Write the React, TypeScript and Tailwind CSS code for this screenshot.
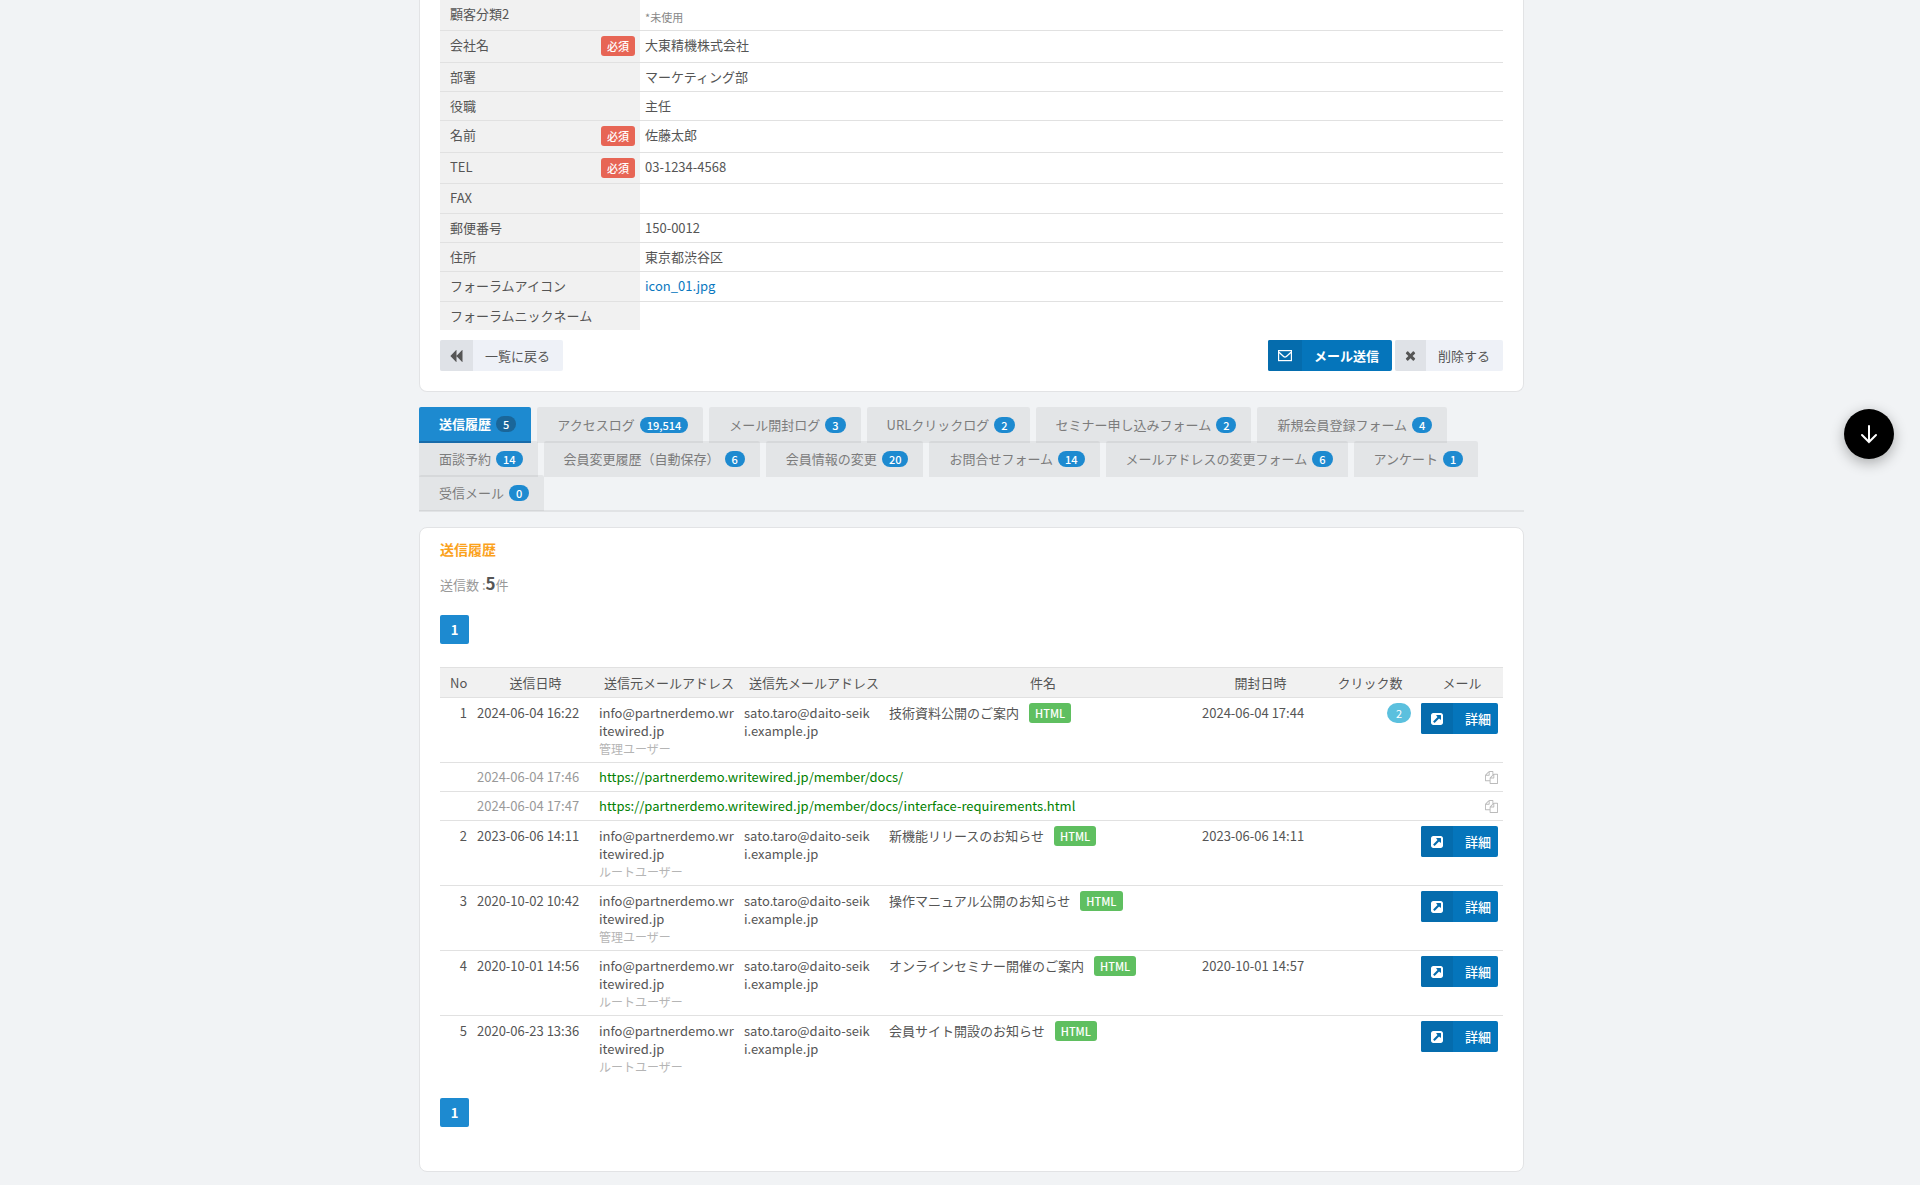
import { Fragment } from "react";
import type { ReactNode } from "react";
import clsx from "clsx";

interface ProfileField {
    label: string;
    value?: string;
    required?: boolean;
    note?: boolean;
    link?: boolean;
}

interface ClickLog {
    clickedAt: string;
    url: string;
}

interface MailHistory {
    no: number;
    sentAt: string;
    user: string;
    subject: string;
    openedAt?: string;
    clicks?: ClickLog[];
}

const FIELDS: ProfileField[] = [
    { label: "顧客分類2", value: "*未使用", note: true },
    { label: "会社名", value: "大東精機株式会社", required: true },
    { label: "部署", value: "マーケティング部" },
    { label: "役職", value: "主任" },
    { label: "名前", value: "佐藤太郎", required: true },
    { label: "TEL", value: "03-1234-4568", required: true },
    { label: "FAX" },
    { label: "郵便番号", value: "150-0012" },
    { label: "住所", value: "東京都渋谷区" },
    { label: "フォーラムアイコン", value: "icon_01.jpg", link: true },
    { label: "フォーラムニックネーム" },
];

const TABS = [
    { label: "送信履歴", count: "5", active: true },
    { label: "アクセスログ", count: "19,514" },
    { label: "メール開封ログ", count: "3" },
    { label: "URLクリックログ", count: "2" },
    { label: "セミナー申し込みフォーム", count: "2" },
    { label: "新規会員登録フォーム", count: "4" },
    { label: "面談予約", count: "14" },
    { label: "会員変更履歴（自動保存）", count: "6" },
    { label: "会員情報の変更", count: "20" },
    { label: "お問合せフォーム", count: "14" },
    { label: "メールアドレスの変更フォーム", count: "6" },
    { label: "アンケート", count: "1" },
    { label: "受信メール", count: "0" },
];

const MAILS: MailHistory[] = [
    {
        no: 1,
        sentAt: "2024-06-04 16:22",
        user: "管理ユーザー",
        subject: "技術資料公開のご案内",
        openedAt: "2024-06-04 17:44",
        clicks: [
            {
                clickedAt: "2024-06-04 17:46",
                url: "https://partnerdemo.writewired.jp/member/docs/",
            },
            {
                clickedAt: "2024-06-04 17:47",
                url: "https://partnerdemo.writewired.jp/member/docs/interface-requirements.html",
            },
        ],
    },
    {
        no: 2,
        sentAt: "2023-06-06 14:11",
        user: "ルートユーザー",
        subject: "新機能リリースのお知らせ",
        openedAt: "2023-06-06 14:11",
    },
    {
        no: 3,
        sentAt: "2020-10-02 10:42",
        user: "管理ユーザー",
        subject: "操作マニュアル公開のお知らせ",
    },
    {
        no: 4,
        sentAt: "2020-10-01 14:56",
        user: "ルートユーザー",
        subject: "オンラインセミナー開催のご案内",
        openedAt: "2020-10-01 14:57",
    },
    {
        no: 5,
        sentAt: "2020-06-23 13:36",
        user: "ルートユーザー",
        subject: "会員サイト開設のお知らせ",
    },
];

function GlyphIcon({
    className,
    d,
    viewBox = "0 0 1792 1792",
}: {
    className?: string;
    d: string;
    viewBox?: string;
}) {
    return (
        <svg
            aria-hidden="true"
            className={clsx("fill-current", className)}
            viewBox={viewBox}
        >
            <path d={d} />
        </svg>
    );
}

function BackwardIcon() {
    return (
        <GlyphIcon
            className="h-[14px] w-[13px]"
            d="M1619 141q19-19 32-13t13 32v1472q0 26-13 32t-32-13l-710-710q-9-9-13-19v710q0 26-13 32t-32-13l-710-710q-19-19-19-45t19-45l710-710q19-19 32-13t13 32v710q4-10 13-19z"
            viewBox="64 0 1664 1792"
        />
    );
}

function CloseIcon() {
    return (
        <GlyphIcon
            className="h-[14px] w-[11px]"
            d="M1490 1322q0 40-28 68l-136 136q-28 28-68 28t-68-28l-294-294-294 294q-28 28-68 28t-68-28l-136-136q-28-28-28-68t28-68l294-294-294-294q-28-28-28-68t28-68l136-136q28-28 68-28t68 28l294 294 294-294q28-28 68-28t68 28l136 136q28 28 28 68t-28 68l-294 294 294 294q28 28 28 68z"
            viewBox="192 64 1408 1792"
        />
    );
}

function OpenIcon() {
    return (
        <GlyphIcon
            className="size-[14px]"
            d="M1408 928v-480q0-26-19-45t-45-19h-480q-42 0-59 39-17 41 14 70l144 144-534 534q-19 19-19 45t19 45l102 102q19 19 45 19t45-19l534-534 144 144q18 19 45 19 12 0 25-5 39-17 39-59zm256-512v960q0 119-84.500 203.500t-203.500 84.500h-960q-119 0-203.500-84.500t-84.500-203.500v-960q0-119 84.500-203.500t203.500-84.500h960q119 0 203.500 84.500t84.500 203.500z"
        />
    );
}

function CopyIcon() {
    return (
        <GlyphIcon
            className="size-[13px]"
            d="M1696 384q40 0 68 28t28 68v1216q0 40-28 68t-68 28h-960q-40 0-68-28t-28-68v-288h-544q-40 0-68-28t-28-68v-672q0-40 20-88t48-76l408-408q28-28 76-48t88-20h416q40 0 68 28t28 68v328q68-40 128-40h416zm-544 213l-299 299h299v-299zm-640-384l-299 299h299v-299zm196 647l316-316v-416h-384v416q0 40-28 68t-68 28h-416v640h512v-256q0-40 20-88t48-76zm956 804v-1152h-384v416q0 40-28 68t-68 28h-416v640h896z"
        />
    );
}

function MailIcon() {
    return (
        <svg
            aria-hidden="true"
            className="h-[12px] w-[14px] fill-none stroke-current"
            viewBox="0 0 14 12"
        >
            <rect height="10" strokeWidth="1.2" width="12.800" x="0.6" y="0.6" />
            <path d="M1 2.200 5.600 6.400Q7 7.600 8.400 6.400L13 2.200" strokeWidth="1.300" />
        </svg>
    );
}

function IconButton({
    children,
    icon,
    primary,
}: {
    children: ReactNode;
    icon: ReactNode;
    primary?: boolean;
}) {
    return (
        <button
            className={clsx(
                "flex h-[31px] cursor-pointer overflow-hidden rounded-[2px]",
                primary
                    ? "bg-[#0575bb] font-bold text-white"
                    : "bg-[#eef1f7] text-[#555]",
            )}
            type="button"
        >
            <span
                className={clsx(
                    "flex h-full items-center px-[10px]",
                    primary ? "bg-[#056cad]" : "bg-[#dfe2e7]",
                )}
            >
                {icon}
            </span>
            <span className="pr-[13px] pl-3 leading-[31px]">{children}</span>
        </button>
    );
}

function Pager() {
    return (
        <nav aria-label="ページ" className="flex">
            <a
                aria-current="page"
                className="size-[29px] rounded-[2px] bg-[#1d8ad0] text-center leading-[30px] font-bold text-white"
                href="#page-1"
            >
                1
            </a>
        </nav>
    );
}

function ProfileCard() {
    return (
        <section className="rounded-b-[8px] border border-t-0 border-[#e2e3e5] bg-white px-5 pb-5">
            <table className="h-[330px] w-full">
                <tbody>
                    {FIELDS.map((field) => (
                        <tr
                            className="border-b border-[#e1e1e1] align-top last:border-b-0"
                            key={field.label}
                        >
                            <th
                                className="w-[200px] bg-[#f1f1f1] py-[5px] pr-[5px] pl-[10px] text-left font-normal"
                                scope="row"
                            >
                                <div className="flex items-start justify-between">
                                    {field.label}
                                    {field.required && (
                                        <span className="h-5 rounded-[3px] bg-[#e76555] px-[6px] text-[11px] leading-[21px] font-medium text-white">
                                            必須
                                        </span>
                                    )}
                                </div>
                            </th>
                            <td
                                className={clsx(
                                    "px-[5px]",
                                    field.note
                                        ? "pt-2 pb-1 text-[11px] text-[#888]"
                                        : "py-[5px]",
                                )}
                            >
                                {field.link ? (
                                    <a className="text-[#0a78c0]" href="#icon">
                                        {field.value}
                                    </a>
                                ) : (
                                    field.value
                                )}
                            </td>
                        </tr>
                    ))}
                </tbody>
            </table>
            <div className="mt-[10px] flex justify-between">
                <IconButton icon={<BackwardIcon />}>一覧に戻る</IconButton>
                <div className="flex gap-[3px]">
                    <IconButton icon={<MailIcon />} primary>
                        メール送信
                    </IconButton>
                    <IconButton icon={<CloseIcon />}>削除する</IconButton>
                </div>
            </div>
        </section>
    );
}

function HistoryTabs() {
    return (
        <nav className="mt-[15px]">
            <ul className="flex flex-wrap gap-x-[6px] border-b-2 border-[#e1e3e5] pb-px">
                {TABS.map((tab) => (
                    <li className="-mb-[2px]" key={tab.label}>
                        <a
                            className={clsx(
                                "flex h-9 items-center gap-[5px] rounded-t-[2px] pr-[15px] pb-px pl-5",
                                tab.active
                                    ? "border-b-2 border-[#1a72b3] bg-[#1d8ad0] font-bold text-white"
                                    : "bg-black/[0.055] text-[#7c7c7c]",
                            )}
                            href={`#${tab.label}`}
                        >
                            {tab.label}
                            <span
                                className={clsx(
                                    "h-4 rounded-full px-[7px] text-[11px] leading-[17px] font-medium text-white",
                                    tab.active ? "bg-[#1a6699]" : "bg-[#1d8ad0]",
                                )}
                            >
                                {tab.count}
                            </span>
                        </a>
                    </li>
                ))}
            </ul>
        </nav>
    );
}

function MailRow({ mail }: { mail: MailHistory }) {
    return (
        <tr className="border-b border-[#e1e1e1] align-top last:border-b-0">
            <td className="px-[5px] pt-[6px] pb-1 text-right">{mail.no}</td>
            <td className="px-[5px] pt-[6px] pb-1">{mail.sentAt}</td>
            <td className="px-[5px] pt-[6px] pb-1 break-all">
                info@partnerdemo.writewired.jp
                <span className="block text-[12px] text-[#b5b5b5]">{mail.user}</span>
            </td>
            <td className="pt-[6px] pr-[13px] pb-1 pl-[5px] break-all">
                sato.taro@daito-seiki.example.jp
            </td>
            <td className="p-[5px]">
                <div className="flex items-start gap-[10px] leading-5">
                    {mail.subject}
                    <span className="h-5 rounded-[3px] bg-[#5fbf60] px-[6px] text-[11px] leading-[21px] font-medium text-white">
                        HTML
                    </span>
                </div>
            </td>
            <td className="px-[5px] pt-[6px] pb-1">{mail.openedAt}</td>
            <td className="p-[5px]">
                {mail.clicks && (
                    <span className="ml-auto block h-5 w-6 rounded-full bg-[#5bc0de] text-center text-[11px] leading-[21px] text-white">
                        {mail.clicks.length}
                    </span>
                )}
            </td>
            <td className="p-[5px]">
                <button
                    className="flex h-[31px] w-full cursor-pointer overflow-hidden rounded-[2px] bg-[#0575bb] font-medium text-white"
                    type="button"
                >
                    <span className="flex h-full w-8 items-center justify-center bg-[#056cad]">
                        <OpenIcon />
                    </span>
                    <span className="flex-1 pr-[7px] text-right leading-[32px]">詳細</span>
                </button>
            </td>
        </tr>
    );
}

function ClickRow({ click }: { click: ClickLog }) {
    return (
        <tr className="border-b border-[#e1e1e1] [&>td]:p-[5px]">
            <td />
            <td className="text-[#999]">{click.clickedAt}</td>
            <td colSpan={5}>
                <a className="text-[#008000]" href={click.url}>
                    {click.url}
                </a>
            </td>
            <td>
                <button
                    aria-label="URLをコピー"
                    className="ml-auto block cursor-pointer text-[#bbb]"
                    type="button"
                >
                    <CopyIcon />
                </button>
            </td>
        </tr>
    );
}

function HistoryCard() {
    return (
        <section className="mt-[15px] rounded-[8px] border border-[#e2e3e5] bg-white px-5 pt-[11px] pb-11">
            <h2 className="text-[14px] leading-5 font-bold text-[#fba21c]">送信履歴</h2>
            <p className="mt-[14px] leading-5 text-[#999]">
                送信数 :<b className="text-[17px] text-[#555]">5</b>件
            </p>
            <div className="mt-5 mb-[23px]">
                <Pager />
            </div>
            <table className="w-full table-fixed">
                <thead>
                    <tr className="h-[30px] border-y border-[#e1e1e1] bg-[#f1f1f1] [&>th]:pr-[5px] [&>th]:pl-[10px] [&>th]:font-normal">
                        <th className="w-[32px]">No</th>
                        <th className="w-[122px]">送信日時</th>
                        <th className="w-[145px]">送信元メールアドレス</th>
                        <th className="w-[145px]">送信先メールアドレス</th>
                        <th>件名</th>
                        <th className="w-[122px]">開封日時</th>
                        <th className="w-[97px]">クリック数</th>
                        <th className="w-[87px]">メール</th>
                    </tr>
                </thead>
                <tbody>
                    {MAILS.map((mail) => (
                        <Fragment key={mail.no}>
                            <MailRow mail={mail} />
                            {mail.clicks?.map((click) => (
                                <ClickRow click={click} key={click.url} />
                            ))}
                        </Fragment>
                    ))}
                </tbody>
            </table>
            <div className="mt-[18px]">
                <Pager />
            </div>
        </section>
    );
}

export default function App() {
    return (
        <div className="min-h-screen bg-[#f1f3f5] pb-3 pl-[23px] font-['Noto_Sans_CJK_JP',sans-serif] text-[13px] leading-[18px] text-[#555]">
            <main className="mx-auto max-w-[1105px]">
                <ProfileCard />
                <HistoryTabs />
                <HistoryCard />
            </main>
            <button
                aria-label="下へ移動"
                className="fixed top-[409px] right-[26px] flex size-[50px] cursor-pointer items-center justify-center rounded-full bg-black text-white shadow-[0_4px_14px_rgba(0,0,0,0.3)]"
                type="button"
            >
                <svg
                    aria-hidden="true"
                    className="size-6 fill-none stroke-current"
                    strokeLinecap="round"
                    strokeWidth="2"
                    viewBox="0 0 24 24"
                >
                    <path d="M12 4v16M5 13l7 7 7-7" />
                </svg>
            </button>
        </div>
    );
}
